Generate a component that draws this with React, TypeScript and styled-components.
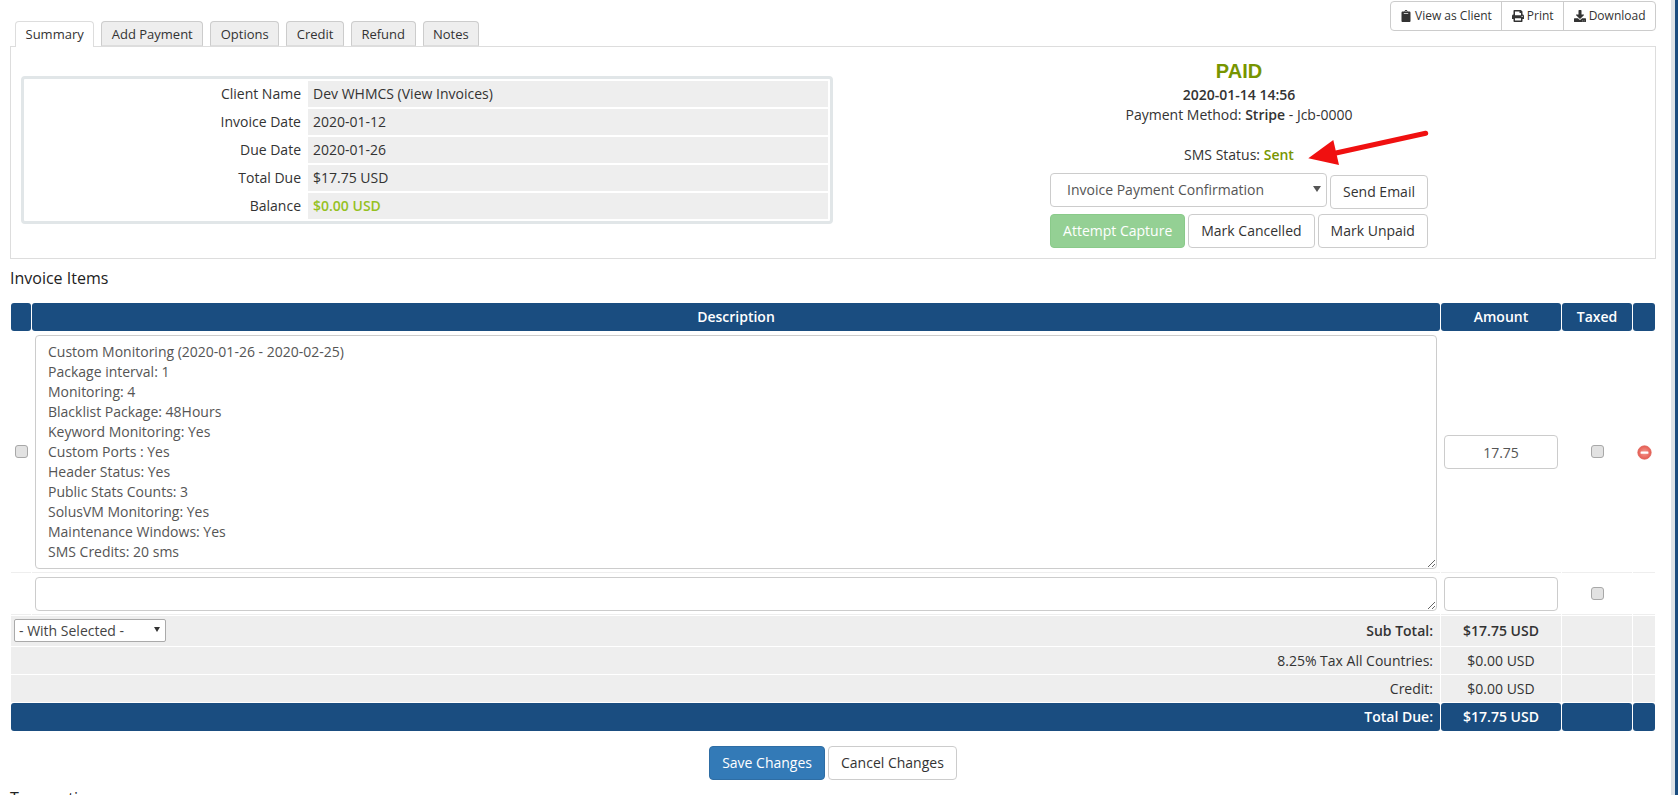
import React from 'react'
import styled, { createGlobalStyle } from 'styled-components'
import { FaClipboard, FaPrint, FaDownload } from 'react-icons/fa'

const GlobalStyle = createGlobalStyle`
  html, body {
    margin: 0;
    padding: 0;
    background: #fff;
    color: #333;
    font-family: "Open Sans", "Liberation Sans", sans-serif;
    font-size: 14px;
    line-height: 20px;
  }
  * { box-sizing: border-box; }
`

const Page = styled.div`
  display: flex;
  height: 795px;
  overflow: hidden;
`

const Main = styled.div`
  flex: 1;
  min-width: 0;
  padding: 0 15px 0 10px;
`

const EdgeBar = styled.div`
  width: 7px;
  display: flex;
  background: #dde3e8;
  justify-content: flex-end;

  &::after {
    content: '';
    width: 3px;
    background: #1a4d80;
  }
`

const TopBar = styled.div`
  display: flex;
  justify-content: space-between;
  align-items: flex-start;
  height: 46px;
`

const Tabs = styled.div`
  display: flex;
  gap: 7px;
  margin: 21px 0 0 5px;
  position: relative;
  z-index: 1;
`

const Tab = styled.div<{ $active?: boolean }>`
  height: ${props => (props.$active ? '26px' : '25px')};
  padding: 0 9.5px;
  font-size: 13px;
  line-height: 25px;
  border: 1px solid ${props => (props.$active ? '#ddd' : '#ccc')};
  border-bottom: ${props => (props.$active ? 'none' : '1px solid #ddd')};
  border-radius: 4px 4px 0 0;
  background: ${props => (props.$active ? '#fff' : '#eee')};
`

const BtnGroup = styled.div`
  display: flex;
  margin-top: 1px;
  border: 1px solid #ccc;
  border-radius: 4px;
  height: 30px;
`

const GroupBtn = styled.div`
  display: flex;
  align-items: center;
  gap: 3px;
  padding: 0 9.5px;
  font-size: 12px;
  border-left: 1px solid #ccc;

  &:first-child {
    border-left: none;
  }
  svg {
    font-size: 12px;
    color: #333;
  }
`

const Panel = styled.div`
  position: relative;
  display: flex;
  height: 213px;
  border: 1px solid #ddd;
  padding: 0 10px 0 10px;
`

const SummaryBox = styled.table`
  width: 812px;
  height: 148px;
  margin-top: 29px;
  table-layout: fixed;
  border: 3px solid #e1e6e8;
  border-radius: 4px;
  border-spacing: 2px;
  border-collapse: separate;

  td {
    height: 26px;
    padding: 0;
  }
`

const LabelCell = styled.td`
  width: 280px;
  text-align: right;
  && { padding-right: 5px; }
`

const ValueCell = styled.td`
  background: #eee;
  && { padding-left: 5px; }
`

const Balance = styled.span`
  color: #95c11f;
  font-weight: 600;
`

const StatusCol = styled.div`
  flex: 1;
  padding-top: 13px;
  display: flex;
  flex-direction: column;
  align-items: center;
  text-align: center;
`

const PaidTitle = styled.div`
  font-family: "Liberation Sans", Arial, sans-serif;
  font-weight: 700;
  font-size: 20px;
  line-height: 22px;
  color: #779500;
  margin-bottom: 3px;
`

const PaidDate = styled.div`
  font-weight: 600;
`

const MethodName = styled.span`
  font-weight: 600;
`

const SmsLine = styled.div`
  margin-top: 20px;
`

const Sent = styled.span`
  color: #779500;
  font-weight: 600;
`

const ActionRow = styled.div<{ $top: number }>`
  display: flex;
  align-items: flex-start;
  gap: 3px;
  margin-top: ${props => props.$top}px;
`

const SelectWrap = styled.div<{ $right: number; $size: number; $color: string }>`
  position: relative;

  &::after {
    content: '';
    position: absolute;
    right: ${props => props.$right}px;
    top: 50%;
    margin-top: -4px;
    border-style: solid;
    border-width: ${props => props.$size + 2}px ${props => props.$size}px 0;
    border-color: ${props => props.$color} transparent transparent;
    pointer-events: none;
  }
`

const Select = styled.select`
  display: block;
  appearance: none;
  width: 277px;
  height: 34px;
  padding: 6px 16px;
  border: 1px solid #ccc;
  border-radius: 4px;
  background: #fff;
  color: #555;
  font: inherit;
`

const Button = styled.button<{ $kind?: 'primary' | 'success'; $top?: number }>`
  height: 34px;
  padding: 0 12px;
  margin-top: ${props => props.$top || 0}px;
  font: inherit;
  border-radius: 4px;
  border: 1px solid ${props =>
    props.$kind === 'primary' ? '#2e6da4' : props.$kind === 'success' ? '#4cae4c' : '#ccc'};
  background: ${props =>
    props.$kind === 'primary' ? '#337ab7' : props.$kind === 'success' ? '#5cb85c' : '#fff'};
  color: ${props => (props.$kind ? '#fff' : '#333')};
  opacity: ${props => (props.$kind === 'success' ? 0.65 : 1)};
`

const ArrowMark = styled.svg`
  position: absolute;
  left: 1294px;
  top: 81px;
`

const Heading = styled.div<{ $top: number; $bottom?: number }>`
  font-size: 16px;
  line-height: 22px;
  color: #222;
  margin: ${props => props.$top}px 0 ${props => props.$bottom || 0}px 0;
`

const ItemsTable = styled.table`
  width: 100%;
  table-layout: fixed;
  border-collapse: separate;
  border-spacing: 1px;
`

const HeadCell = styled.th<{ $align?: string }>`
  height: 28px;
  padding: 0 7px;
  background: #1a4d80;
  color: #fff;
  font-weight: 600;
  border-radius: 3px;
  text-align: ${props => props.$align || 'center'};
`

const ItemCell = styled.td<{ $center?: boolean }>`
  padding: 3px;
  border-bottom: 1px solid #eee;
  vertical-align: middle;
  text-align: ${props => (props.$center ? 'center' : 'left')};
`

const EdgeCell = styled(ItemCell)`
  padding: 0;
`

const TotalCell = styled.td<{ $h: number; $align?: string; $bold?: boolean }>`
  height: ${props => props.$h}px;
  padding: 0 7px;
  background: #eee;
  font-weight: ${props => (props.$bold ? 600 : 400)};
  text-align: ${props => props.$align || 'center'};
`

const TotalInner = styled.div`
  display: flex;
  align-items: center;
  justify-content: space-between;
  margin-left: -4px;
`

const BulkSelect = styled.select`
  display: block;
  appearance: none;
  width: 152px;
  height: 23px;
  margin-top: -1px;
  padding: 0 4px;
  border: 1px solid #aaa;
  border-radius: 2px;
  background: #fff;
  color: #444;
  font-family: inherit;
  font-size: 14px;
  font-weight: 400;
`

const DescArea = styled.textarea<{ $h: number }>`
  display: block;
  width: 100%;
  height: ${props => props.$h}px;
  padding: 6px 12px;
  border: 1px solid #ccc;
  border-radius: 4px;
  color: #555;
  font: inherit;
`

const AmountInput = styled.input`
  display: block;
  width: 100%;
  height: 34px;
  padding: 6px 12px;
  border: 1px solid #ccc;
  border-radius: 4px;
  text-align: center;
  color: #555;
  font: inherit;
`

const Check = styled.input.attrs({ type: 'checkbox' })`
  appearance: none;
  display: block;
  width: 13px;
  height: 13px;
  margin: -2px auto 0;
  background: #e2e2e2;
  border: 1px solid #a8a8a8;
  border-radius: 3px;
`

const RemoveGlyph = styled.svg`
  display: block;
  margin: 1px auto 0;
`

const FormActions = styled.div`
  display: flex;
  justify-content: center;
  gap: 3px;
  margin-top: 14px;
`

const summaryRows = [
  { label: 'Client Name', value: 'Dev WHMCS (View Invoices)' },
  { label: 'Invoice Date', value: '2020-01-12' },
  { label: 'Due Date', value: '2020-01-26' },
  { label: 'Total Due', value: '$17.75 USD' },
]

const itemText = `Custom Monitoring (2020-01-26 - 2020-02-25)
Package interval: 1
Monitoring: 4
Blacklist Package: 48Hours
Keyword Monitoring: Yes
Custom Ports : Yes
Header Status: Yes
Public Stats Counts: 3
SolusVM Monitoring: Yes
Maintenance Windows: Yes
SMS Credits: 20 sms`

const RemoveIcon = () => (
  <RemoveGlyph width="15" height="15" viewBox="0 0 15 15">
    <defs>
      <radialGradient id="removeFill" cx="0.5" cy="0.5" r="0.55">
        <stop offset="0" stopColor="#f59a90" />
        <stop offset="1" stopColor="#e4574d" />
      </radialGradient>
    </defs>
    <circle cx="7.5" cy="7.5" r="6.7" fill="url(#removeFill)" stroke="#e0665c" strokeWidth="0.8" />
    <rect x="3.6" y="6.4" width="7.8" height="2.3" rx="0.5" fill="#fff" />
  </RemoveGlyph>
)

const App: React.FC = () => {
  return (
    <Page>
      <GlobalStyle />
      <Main>
        <TopBar>
          <Tabs>
            <Tab $active>Summary</Tab>
            <Tab>Add Payment</Tab>
            <Tab>Options</Tab>
            <Tab>Credit</Tab>
            <Tab>Refund</Tab>
            <Tab>Notes</Tab>
          </Tabs>
          <BtnGroup>
            <GroupBtn><FaClipboard />View as Client</GroupBtn>
            <GroupBtn><FaPrint />Print</GroupBtn>
            <GroupBtn><FaDownload />Download</GroupBtn>
          </BtnGroup>
        </TopBar>

        <Panel>
          <SummaryBox>
            <tbody>
              {summaryRows.map(row => (
                <tr key={row.label}>
                  <LabelCell>{row.label}</LabelCell>
                  <ValueCell>{row.value}</ValueCell>
                </tr>
              ))}
              <tr>
                <LabelCell>Balance</LabelCell>
                <ValueCell><Balance>$0.00 USD</Balance></ValueCell>
              </tr>
            </tbody>
          </SummaryBox>

          <StatusCol>
            <PaidTitle>PAID</PaidTitle>
            <PaidDate>2020-01-14 14:56</PaidDate>
            <div>Payment Method: <MethodName>Stripe</MethodName> - Jcb-0000</div>
            <SmsLine>SMS Status: <Sent>Sent</Sent></SmsLine>
            <ActionRow $top={8}>
              <SelectWrap $right={6} $size={4} $color="#555">
                <Select defaultValue="confirm">
                  <option value="confirm">Invoice Payment Confirmation</option>
                </Select>
              </SelectWrap>
              <Button $top={2}>Send Email</Button>
            </ActionRow>
            <ActionRow $top={5}>
              <Button $kind="success">Attempt Capture</Button>
              <Button>Mark Cancelled</Button>
              <Button>Mark Unpaid</Button>
            </ActionRow>
          </StatusCol>

          <ArrowMark width="135" height="40" viewBox="0 0 135 40">
            <path d="M3.3 30.3 L28.3 12 L34 37 Z" fill="#f01010" />
            <path d="M31 25 L120.7 5.3" stroke="#f01010" strokeWidth="5" strokeLinecap="round" fill="none" />
          </ArrowMark>
        </Panel>

        <Heading $top={8} $bottom={13}>Invoice Items</Heading>

        <ItemsTable>
          <colgroup>
            <col style={{ width: 20 }} />
            <col />
            <col style={{ width: 120 }} />
            <col style={{ width: 70 }} />
            <col style={{ width: 22 }} />
          </colgroup>
          <thead>
            <tr>
              <HeadCell />
              <HeadCell>Description</HeadCell>
              <HeadCell>Amount</HeadCell>
              <HeadCell>Taxed</HeadCell>
              <HeadCell />
            </tr>
          </thead>
          <tbody>
            <tr>
              <EdgeCell><Check /></EdgeCell>
              <ItemCell><DescArea $h={234} defaultValue={itemText} /></ItemCell>
              <ItemCell><AmountInput defaultValue="17.75" /></ItemCell>
              <ItemCell><Check /></ItemCell>
              <EdgeCell><RemoveIcon /></EdgeCell>
            </tr>
            <tr>
              <ItemCell />
              <ItemCell><DescArea $h={34} /></ItemCell>
              <ItemCell><AmountInput /></ItemCell>
              <ItemCell><Check /></ItemCell>
              <ItemCell />
            </tr>
            <tr>
              <TotalCell $h={30} $align="right" $bold colSpan={2}>
                <TotalInner>
                  <SelectWrap $right={6} $size={3.5} $color="#333">
                    <BulkSelect defaultValue="none">
                      <option value="none">- With Selected -</option>
                    </BulkSelect>
                  </SelectWrap>
                  Sub Total:
                </TotalInner>
              </TotalCell>
              <TotalCell $h={30} $bold>$17.75 USD</TotalCell>
              <TotalCell $h={30} />
              <TotalCell $h={30} />
            </tr>
            <tr>
              <TotalCell $h={27} $align="right" colSpan={2}>8.25% Tax All Countries:</TotalCell>
              <TotalCell $h={27}>$0.00 USD</TotalCell>
              <TotalCell $h={27} />
              <TotalCell $h={27} />
            </tr>
            <tr>
              <TotalCell $h={27} $align="right" colSpan={2}>Credit:</TotalCell>
              <TotalCell $h={27}>$0.00 USD</TotalCell>
              <TotalCell $h={27} />
              <TotalCell $h={27} />
            </tr>
            <tr>
              <HeadCell $align="right" colSpan={2}>Total Due:</HeadCell>
              <HeadCell>$17.75 USD</HeadCell>
              <HeadCell />
              <HeadCell />
            </tr>
          </tbody>
        </ItemsTable>

        <FormActions>
          <Button $kind="primary">Save Changes</Button>
          <Button>Cancel Changes</Button>
        </FormActions>

        <Heading $top={7}>Transactions</Heading>
      </Main>
      <EdgeBar />
    </Page>
  )
}

export default App
